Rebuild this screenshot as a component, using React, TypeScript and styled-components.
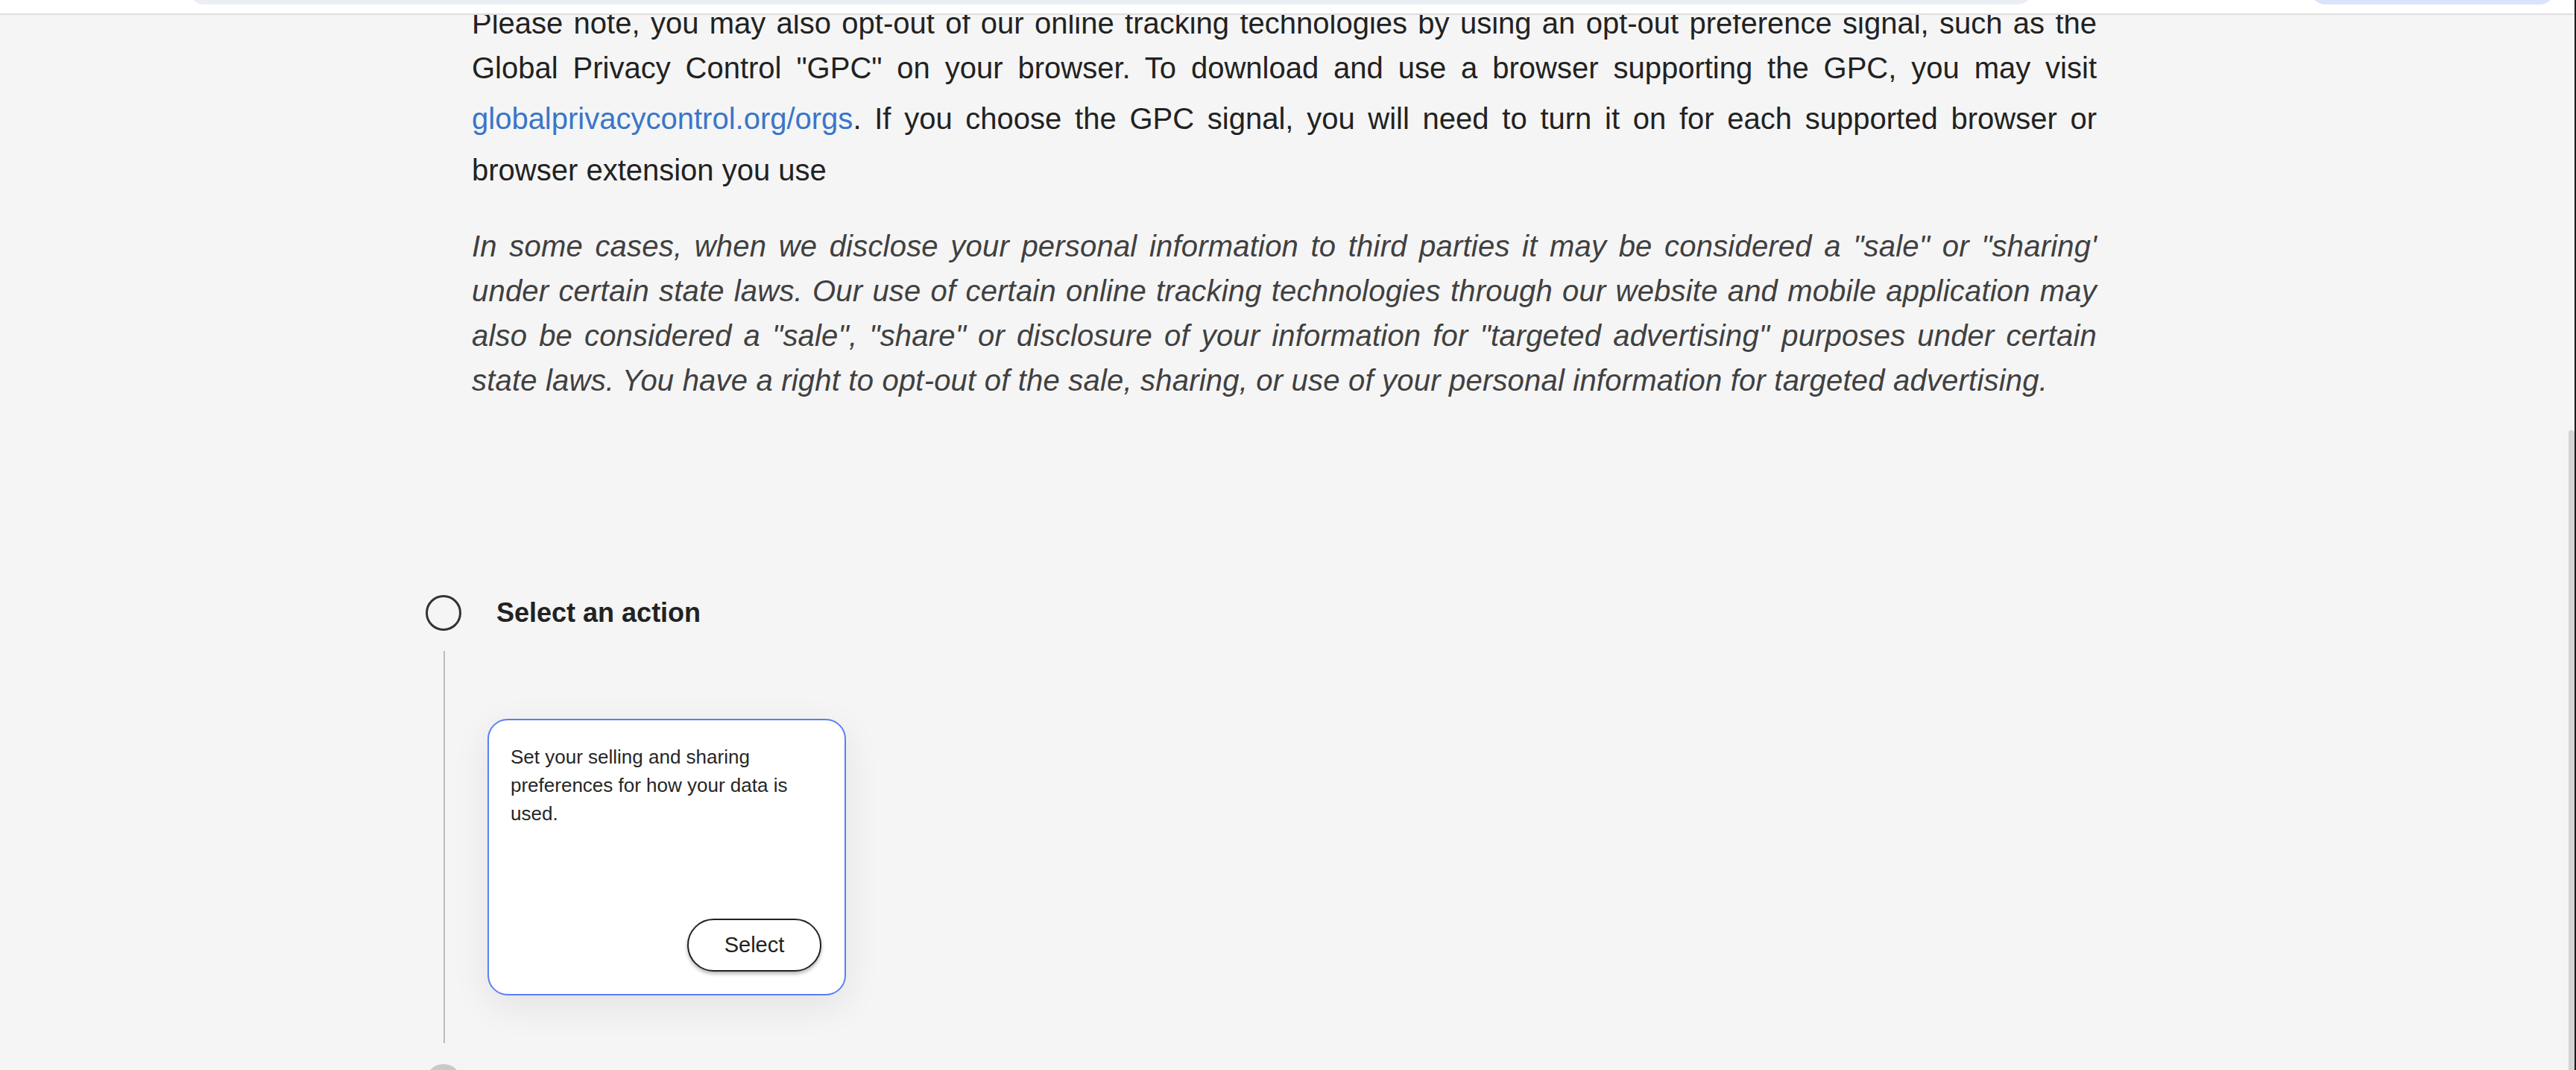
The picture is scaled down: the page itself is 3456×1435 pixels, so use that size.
import styled, { createGlobalStyle } from 'styled-components';

const GlobalStyle = createGlobalStyle`
html, body {
    margin: 0;
    padding: 0;
    background: #f5f5f5;
    overflow: hidden;
}
body {
    font-family: "Liberation Sans", Arial, sans-serif;
    color: #222;
}
`

const TopBar = styled.header`
position: fixed;
top: 0;
left: 0;
right: 0;
height: 18px;
background: #fff;
border-bottom: 2px solid #dedede;
display: flex;
justify-content: space-between;
padding: 0 29px 0 254px;
overflow: hidden;
z-index: 10;
`

const Pill = styled.div<{ $w: number; $tone: string }>`
width: ${p => p.$w}px;
height: 40px;
margin-top: -34px;
border-radius: 20px;
background: ${p => p.$tone};
`

const ScrollEdge = styled.div`
position: fixed;
top: 0;
right: 0;
bottom: 0;
width: 2px;
background: #1c1c1c;
z-index: 11;
`

const ScrollThumb = styled.div`
position: fixed;
top: 577px;
right: 2px;
bottom: -20px;
width: 8px;
border-radius: 4px;
background: #d4d4d4;
z-index: 11;
`

const Page = styled.main`
padding-top: 1px;
`

const Notice = styled.section`
margin-left: 633px;
width: 2180px;
`

const Para = styled.p<{ $italic?: boolean }>`
margin: ${p => (p.$italic ? '42px 0 0' : '0')};
font-size: 40px;
line-height: 60px;
text-align: justify;
color: ${p => (p.$italic ? '#404040' : '#222')};
font-style: ${p => (p.$italic ? 'italic' : 'normal')};
font-weight: ${p => (p.$italic ? 300 : 400)};
letter-spacing: ${p => (p.$italic ? '0.2px' : '0')};
`

const Link = styled.a`
line-height: 77px;
color: #3a76c9;
text-decoration: none;
`

const Steps = styled.section`
margin: 258px 0 0 571px;
`

const StepHead = styled.div`
display: flex;
align-items: center;
gap: 47px;
`

const Dot = styled.div<{ $done?: boolean }>`
width: 48px;
height: 48px;
box-sizing: border-box;
border-radius: 50%;
border: ${p => (p.$done ? 'none' : '3px solid #333')};
background: ${p => (p.$done ? '#c9c9c9' : 'transparent')};
flex-shrink: 0;
`

const StepTitle = styled.h3`
margin: 0;
font-size: 36px;
font-weight: 700;
color: #222;
`

const StepBody = styled.div`
margin: 27px 0 28px 24px;
border-left: 2px solid #bdbdbd;
padding: 91px 0 64px 57px;
`

const ActionCard = styled.div`
box-sizing: border-box;
width: 481px;
height: 371px;
background: #fff;
border: 2px solid #5a7ff2;
border-radius: 27px;
padding: 30px 31px 30px 29px;
display: flex;
flex-direction: column;
justify-content: space-between;
box-shadow: 0 14px 50px rgba(0, 0, 0, 0.08);
`

const CardText = styled.p`
margin: 0;
font-size: 26px;
line-height: 38px;
color: #262626;
`

const SelectBtn = styled.button`
align-self: flex-end;
width: 180px;
height: 71px;
box-sizing: border-box;
border: 2px solid #222;
border-radius: 36px;
background: #fff;
font-family: "Liberation Sans", Arial, sans-serif;
font-size: 29px;
color: #222;
box-shadow: 0 3px 5px rgba(0, 0, 0, 0.3);
cursor: pointer;
`

export default function App() {
    return (
        <>
            <GlobalStyle />
            <TopBar>
                <Pill $w={2473} $tone="#eceef6" />
                <Pill $w={327} $tone="#d9e3fa" />
            </TopBar>
            <ScrollEdge />
            <ScrollThumb />
            <Page>
                <Notice>
                    <Para>
                        Please note, you may also opt-out of our online tracking technologies by using an opt-out preference signal, such as the Global Privacy Control "GPC" on your browser. To download and use a browser supporting the GPC, you may visit <Link href="#">globalprivacycontrol.org/orgs</Link>. If you choose the GPC signal, you will need to turn it on for each supported browser or browser extension you use
                    </Para>
                    <Para $italic>
                        In some cases, when we disclose your personal information to third parties it may be considered a "sale" or "sharing' under certain state laws. Our use of certain online tracking technologies through our website and mobile application may also be considered a "sale", "share" or disclosure of your information for "targeted advertising" purposes under certain state laws. You have a right to opt-out of the sale, sharing, or use of your personal information for targeted advertising.
                    </Para>
                </Notice>
                <Steps>
                    <StepHead>
                        <Dot />
                        <StepTitle>Select an action</StepTitle>
                    </StepHead>
                    <StepBody>
                        <ActionCard>
                            <CardText>Set your selling and sharing preferences for how your data is used.</CardText>
                            <SelectBtn>Select</SelectBtn>
                        </ActionCard>
                    </StepBody>
                    <StepHead>
                        <Dot $done />
                    </StepHead>
                </Steps>
            </Page>
        </>
    );
}
